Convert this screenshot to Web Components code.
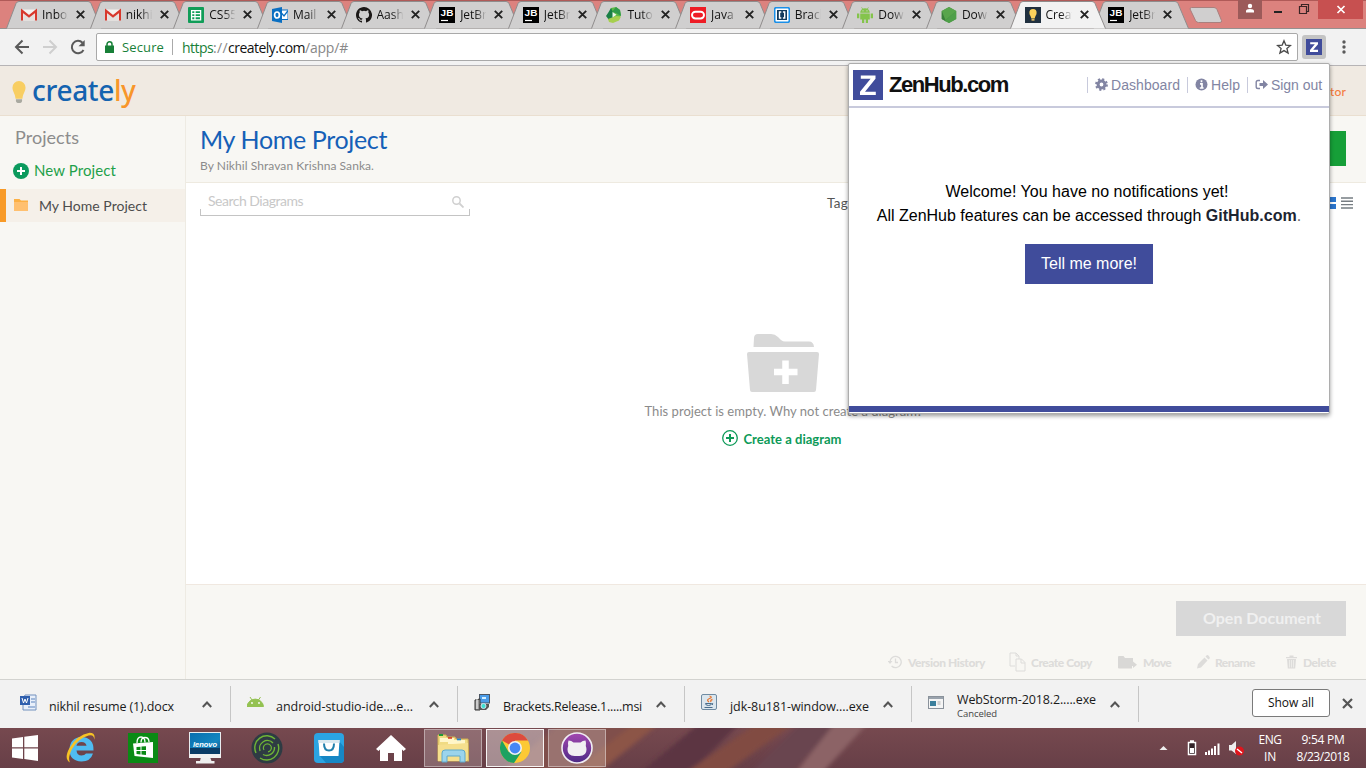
<!DOCTYPE html>
<html lang="en">
<head>
<meta charset="utf-8">
<title>Creately</title>
<style>
html,body{margin:0;height:100%;overflow:hidden}
body{font-family:"Open Sans","Noto Sans",sans-serif;font-size:12px;width:1366px;height:768px}
</style>
</head>
<body>
<desktop-screen></desktop-screen>
<script>
function define(name, css, html, setup) {
  const tpl = document.createElement('template');
  tpl.innerHTML = '<style>*{box-sizing:border-box}svg{display:block;flex:none}' + css + '</style>' + html;
  customElements.define(name, class extends HTMLElement {
    connectedCallback() {
      if (this.shadowRoot) return;
      const root = this.attachShadow({mode: 'open'});
      root.append(tpl.content.cloneNode(true));
      if (setup) setup(this, root);
    }
  });
}

/* Single line of text spread to a given width through letter spacing. */
define('fit-text', ':host{display:inline-block;white-space:pre;flex:none}span{display:inline-block}', '<span><slot></slot></span>', (el, root) => {
  const w = +el.getAttribute('w'), s = root.querySelector('span');
  const sp = (w - s.getBoundingClientRect().width) / el.textContent.length;
  s.style.letterSpacing = sp.toFixed(3) + 'px';
});

const ICONS = {
  gmail: '<rect x="1" y="2.5" width="14" height="11" rx="1" fill="#f4f2f0"/><path d="M3 13.5V5l5 4 5-4v8.5" fill="#e3e0de"/><path d="M1 13.5V3.8L8 9.4l7-5.6v9.7" fill="none" stroke="#d8382c" stroke-width="2.2"/>',
  sheets: '<rect width="16" height="16" rx="1" fill="#109d58"/><path d="M3.6 3.6h9v9.2h-9zM3.6 6.6h9M3.6 9.6h9M7 3.6v9" fill="none" stroke="#fff" stroke-width="1.3"/>',
  outlook: '<path d="M8 3h8v9.5H8z" fill="#fff" stroke="#0a6fc2"/><path d="M8.5 5l3.5 4L15.8 4" fill="none" stroke="#0a6fc2" stroke-width="1.3"/><path d="M0 2l10-2v16L0 14z" fill="#0a6fc2"/><ellipse cx="5" cy="8" rx="2.4" ry="3" fill="none" stroke="#fff" stroke-width="1.7"/>',
  github: '<path fill="#1b1817" d="M8 0C3.58 0 0 3.58 0 8c0 3.54 2.29 6.53 5.47 7.59.4.07.55-.17.55-.38 0-.19-.01-.82-.01-1.49-2.01.37-2.53-.49-2.69-.94-.09-.23-.48-.94-.82-1.13-.28-.15-.68-.52-.01-.53.63-.01 1.08.58 1.23.82.72 1.21 1.87.87 2.33.66.07-.52.28-.87.51-1.07-1.78-.2-3.64-.89-3.64-3.95 0-.87.31-1.59.82-2.15-.08-.2-.36-1.02.08-2.12 0 0 .67-.21 2.2.82a7.4 7.4 0 0 1 4 0c1.53-1.04 2.2-.82 2.2-.82.44 1.1.16 1.92.08 2.12.51.56.82 1.27.82 2.15 0 3.07-1.87 3.75-3.65 3.95.29.25.54.73.54 1.48 0 1.07-.01 1.93-.01 2.2 0 .21.15.46.55.38A8 8 0 0 0 8 0z"/>',
  jb: '<rect width="16" height="16" fill="#000"/><path d="M2 13.5h7" stroke="#fff" stroke-width="1.2"/><text x="1.6" y="9" font-family="Liberation Sans" font-weight="700" font-size="9.5" textLength="12.8" lengthAdjust="spacingAndGlyphs" fill="#fff">JB</text>',
  tuto: '<path d="M5 1l5-1 4 3 1 5-3 5-6 1-3-5z" fill="#5cb947"/><path d="M5 1l2 4v6l-4 2-3-4 2-3z" fill="#1a7f46"/><path d="M10 0l4 3 1 6-5-3-4-1z" fill="#2f9a4a"/><path d="M2 12l8-3 5 .5-2 4-6 2.500-4-1z" fill="#a6cf4d"/><path d="M6.500 5l4 2.800-4 2.700z" fill="#eef7ea"/>',
  oracle: '<rect width="16" height="16" fill="#ee1c25"/><rect x="2" y="4.7" width="12" height="6.8" rx="3.4" fill="none" stroke="#fff" stroke-width="1.9"/>',
  brackets: '<rect x=".7" y=".7" width="14.6" height="14.6" rx="1.5" fill="#fff" stroke="#1a8fe8" stroke-width="1.600"/><rect x="3" y="3" width="10" height="10" fill="#123a5c"/><path d="M7.300 5H5.500v6h1.800M8.900 5h1.800v6H8.900" stroke="#fff" stroke-width="1.4" fill="none"/>',
  android: '<path d="M3.2 5.8a4.8 4.6 0 0 1 9.6 0zM3.2 6.4h9.6v6.2H3.2zM0 6.6h2.3v4.6H0zM13.7 6.6H16v4.6h-2.3zM5 12h2.2v4H5zM8.8 12H11v4H8.8z" fill="#84c44c"/><path d="M4.6.4l1.2 1.8M11.4.4l-1.2 1.8" stroke="#84c44c" stroke-width=".8"/><circle cx="6" cy="3.8" r=".6" fill="#ddd"/><circle cx="10" cy="3.8" r=".6" fill="#ddd"/>',
  node: '<path d="M8 0l7.2 4v8L8 16 .8 12V4z" fill="#4b9a45"/><path d="M8 0l7.2 4-11 9L.8 12V4z" fill="#58a54c"/><path d="M.8 4L5 14.400.8 12z" fill="#3a7f3b"/><path d="M15.2 4L4 14l4 2 7.2-4z" fill="#4f9f49"/>',
  bulb: '<rect width="16" height="16" fill="#20303f"/><path d="M8 2a3.7 3.7 0 0 0-3.6 3.9C4.4 8 6 8.800 6.300 11.500h3.400C10 8.800 11.600 8 11.600 5.900A3.700 3.700 0 0 0 8 2z" fill="#fbd15b"/><path d="M6.500 12h3v1.700h-3z" fill="#d9b768"/>'
};

define('browser-tab', `
:host{display:block;flex:none;width:97px;height:29px;margin-right:-13.38px;position:relative}
.bg{position:absolute;inset:0}
.row{position:relative;display:flex;align-items:center;padding:0 0 0 15px;height:29px}
.t{margin-left:5px;width:27px;overflow:hidden;white-space:nowrap;font-size:12px;color:#111;-webkit-mask-image:linear-gradient(90deg,#000 55%,transparent 98%)}
.x{margin-left:7px}`,
`<svg class="bg" width="97" height="29"><path class="f" d="M.5 28.500L10 3.500Q11 1.500 13 1.500H82Q84 1.500 85 3.500L95.500 28.500" stroke="#8f8c8c"/></svg>
<div class="row"><svg class="i" width="16" height="16" viewBox="0 0 16 16"></svg><div class="t"><slot></slot></div>
<svg class="x" width="9" height="9" viewBox="0 0 9 9"><path d="M.8.8l7.400 7.400M8.200.8L.8 8.200" stroke="#222" stroke-width="1.900"/></svg></div>`,
(el, r) => {
  r.querySelector('.i').innerHTML = ICONS[el.getAttribute('icon')];
  const on = el.hasAttribute('active');
  r.querySelector('.f').setAttribute('fill', on ? '#f2f2f2' : '#d0cfcf');
  if (on) el.style.zIndex = 3;
});

define('tab-strip', `
:host{display:flex;height:29px;background:linear-gradient(#b05a58 0 1px,#dc827e 1px 28px,#96908f 28px);padding-left:6px;width:1366px;position:relative}
.new{margin:6px 0 0 12px}.sp{flex:1}
.c{display:flex;height:19px}.c div{display:flex;justify-content:center}
.u{width:24px;background:#9c5a59}.m,.r{width:28px}.cl{width:45px;background:#c75050;margin-right:3px}`,
`<browser-tab icon="gmail">Inbox</browser-tab><browser-tab icon="gmail">nikhil</browser-tab><browser-tab icon="sheets">CS5540</browser-tab><browser-tab icon="outlook">Mail -</browser-tab><browser-tab icon="github">Aasha</browser-tab><browser-tab icon="jb">JetBrains</browser-tab><browser-tab icon="jb">JetBrains</browser-tab><browser-tab icon="tuto">Tutorial</browser-tab><browser-tab icon="oracle">Java S</browser-tab><browser-tab icon="brackets">Brackets</browser-tab><browser-tab icon="android">Download</browser-tab><browser-tab icon="node">Download</browser-tab><browser-tab icon="bulb" active>Creately</browser-tab><browser-tab icon="jb">JetBrains</browser-tab>
<svg class="new" width="34" height="19"><path d="M1 3q0-1.500 1.500-1.500H25q2 0 3 2l4.500 11q.5 2-1.500 2H9.500q-2 0-3-2z" fill="#d0cfcf" stroke="#a9807e"/></svg>
<div class="sp"></div>
<div class="c"><div class="u"><svg width="10" height="19" viewBox="0 0 10 19"><circle cx="5" cy="6" r="2.200" fill="#fff"/><path d="M1 12.500V11q0-2 4-2t4 2v1.500z" fill="#fff"/></svg></div>
<div class="m"><svg width="28" height="19"><path d="M12 12h8" stroke="#222" stroke-width="2"/></svg></div>
<div class="r"><svg width="28" height="19"><path d="M9.500 6.500h7v7h-7zM11.500 6V4.500h7v7H17" stroke="#3a2525" fill="none" stroke-width="1.200"/></svg></div>
<div class="cl"><svg width="45" height="19"><path d="M19.500 6l7 7M26.500 6l-7 7" stroke="#fff" stroke-width="1.700"/></svg></div></div>`);

define('browser-toolbar', `
:host{display:flex;align-items:center;height:37px;background:#f2f2f2;border-bottom:1px solid #b6b4b6;padding-left:13px}
.b{margin-right:10px}
.box{display:flex;align-items:center;width:1202px;height:28px;margin-left:-1px;background:#fff;border:1px solid #a9a9a9;border-radius:2px;padding:0 5px 0 8px;font-size:14px;color:#888}
.g{color:#188038}.k{color:#111}.lock{margin-right:8px}.sep{width:1px;height:16px;background:#aaa;margin:0 9px 0 8px}
.z{width:24px;height:24px;margin-left:4px;border-radius:3px;background:#c4c4c4;display:grid;place-items:center}.dots{margin-left:15px}`,
`<svg class="b" width="18" height="18" viewBox="0 0 18 18"><path d="M9.500 2.500L3 9l6.500 6.500M3 9h13" stroke="#5a5a5a" stroke-width="2" fill="none"/></svg>
<svg class="b" width="18" height="18" viewBox="0 0 18 18"><path d="M8.500 2.500L15 9l-6.500 6.500M15 9H2" stroke="#cfcfcf" stroke-width="2" fill="none"/></svg>
<svg class="b" width="18" height="18" viewBox="0 0 18 18"><path d="M14.500 12a6.200 6.200 0 1 1-1-7.300" stroke="#5a5a5a" stroke-width="2" fill="none"/><path d="M15.700 2v6.300h-6.200z" fill="#5a5a5a"/></svg>
<div class="box"><svg class="lock" width="9" height="12" viewBox="0 0 9 12"><path d="M0 4.500h9V12H0z" fill="#188038"/><path d="M2 5V3.300a2.500 2.500 0 0 1 5 0V5" fill="none" stroke="#188038" stroke-width="1.500"/></svg>
<fit-text w="42" class="g" style="font-size:13px">Secure</fit-text><div class="sep"></div><fit-text w="31" class="g">https</fit-text><fit-text w="15">://</fit-text><fit-text w="77" class="k">creately.com</fit-text><fit-text w="43">/app/#</fit-text><div style="flex:1"></div>
<svg width="16" height="16" viewBox="0 0 16 16"><path d="M8 1.800l1.800 4.300 4.700.4-3.600 3 1.200 4.600L8 11.600l-4.100 2.500 1.200-4.600-3.600-3 4.700-.4z" fill="none" stroke="#4a4a4a" stroke-width="1.300"/></svg></div>
<div class="z"><svg width="16" height="16" viewBox="0 0 16 16"><rect width="16" height="16" fill="#404c9b"/><path d="M4.200 3.200h7.800v2L7.200 10.800H12v2.100H4v-2l4.800-5.600H4.200z" fill="#fff"/></svg></div>
<svg class="dots" width="6" height="14" viewBox="0 0 6 14"><g fill="#5a5a5a"><circle cx="3" cy="2" r="1.700"/><circle cx="3" cy="7" r="1.700"/><circle cx="3" cy="12" r="1.700"/></g></svg>`);

define('creately-header', `
:host{display:flex;height:50px;background:#f0eae2;border-bottom:1px solid #eadfd0;padding:0 20px 0 12px;align-items:center;font-family:Lato,sans-serif}
.bulb{margin-top:3px}
.logo{font-family:"Noto Sans","Open Sans",sans-serif;font-size:28px;font-weight:500;margin-left:6px;color:#1463b0;display:flex;line-height:36px;height:36px;margin-top:-1px}
.o{color:#f8962a}.r{margin-left:auto;color:#f47b3c;font-size:12px;font-weight:500;margin-top:2px}`,
`<svg class="bulb" width="14" height="23" viewBox="0 0 14 24"><path d="M7 0A6.800 6.800 0 0 0 .2 7C.2 11 3 13 3.400 18.500h7.200C11 13 13.800 11 13.800 7A6.800 6.800 0 0 0 7 0z" fill="#f8ce62"/><path d="M3.800 19h6.400v1.500q0 2.500-3.200 2.500t-3.200-2.500z" fill="#a9a9a0"/></svg>
<div class="logo"><fit-text w="82">create</fit-text><fit-text class="o" w="21">ly</fit-text></div><div class="r"><fit-text w="16">tor</fit-text></div>`);

define('project-sidebar', `
:host{display:block;width:186px;background:#f8f7f3;border-right:1px solid #eeebe3;padding-top:9px;font-family:Lato,sans-serif}
.h{font-size:18px;color:#8c8c8c;height:27px;line-height:25px;padding-left:15px}
.n{display:flex;align-items:center;height:37px;padding:1px 0 0 13px;color:#1ea04a;font-size:15px}.n svg{margin-right:5px}.n fit-text{margin-top:-3px}
.p{display:flex;align-items:center;height:33px;border-left:6px solid #f89a27;background:#f5f0e9;font-size:14px;color:#4d4d4d;padding:0 0 1px 8px}.p svg{margin-right:11px}`,
`<div class="h"><fit-text w="64">Projects</fit-text></div>
<div class="n"><svg width="16" height="16"><circle cx="8" cy="8" r="8" fill="#0b9a5d"/><path d="M8 4v8M4 8h8" stroke="#fff" stroke-width="2"/></svg><fit-text w="82">New Project</fit-text></div>
<div class="p"><svg width="14" height="12"><path d="M0 0h5.500l1.500 1.500h7V12H0z" fill="#fcb045"/><path d="M0 3h14v9H0z" fill="#ffc070"/></svg><fit-text w="108">My Home Project</fit-text></div>`);

define('action-link', `
:host{display:flex;align-items:center;font:900 12px Lato,sans-serif;color:#dddcda;height:20px}svg{margin-right:var(--g,5px)}`,
`<slot name="i"></slot><slot></slot>`);

define('project-view', `
:host{display:grid;grid-template-rows:67px 401px 95px;flex:1;font-family:Lato,sans-serif;background:#fff}
.head{background:#f8f7f3;border-bottom:1px solid #eeeae0;padding:7px 20px 0 14px;display:flex;justify-content:space-between}
.t{font-size:25px;line-height:32px;height:34px;color:#1560b7}.by{font-size:12px;line-height:18px;color:#8b8b8b}
.gb{width:170px;height:35px;background:#169f38;margin-top:8px}
.mid{display:flex;flex-direction:column}
.tools{display:flex;height:40px;padding:6px 13px 0 14px;font-size:14px}
.s{width:270px;height:27px;display:flex;align-items:center;padding:0 6px 1px 8px;justify-content:space-between;color:#c8c8c8;background:linear-gradient(#c4c4c4,#c4c4c4) 0 100%/1px 6px no-repeat,linear-gradient(#c4c4c4,#c4c4c4) 100% 100%/1px 6px no-repeat;border-bottom:1px solid #c4c4c4}
.s fit-text{margin-top:-2px}.s svg{margin-top:1px}
.tag{margin-left:357px;color:#555;line-height:28px;font-size:13.500px;width:480px}
.v{display:flex;gap:5px;margin-left:auto;padding-top:8px}
.e{display:flex;flex-direction:column;align-items:center;padding:111px 0 0 10px;width:100%;margin-left:2px}
.m{font-size:13px;color:#8b8b8b;line-height:18px;margin-top:10px;margin-left:1px}
.c{display:flex;align-items:center;gap:6px;color:#0d9a58;font-size:13px;font-weight:700;margin-top:9px;height:18px;margin-right:3px}.c fit-text{margin-top:2px}
.foot{background:#f8f7f3;border-top:1px solid #f0e8e0;display:flex;flex-direction:column;align-items:flex-end;padding:16px 20px 0 0}
.ob{width:170px;height:35px;background:#d8d8d8;color:#f0f0f0;font-size:16px;font-weight:700;display:flex;align-items:center;padding:0 0 2px 27px;flex:none}
.a{display:flex;margin:16px 10px 0 0}`,
`<div class="head"><div><div class="t"><fit-text w="187">My Home Project</fit-text></div><div class="by"><fit-text w="174">By Nikhil Shravan Krishna Sanka.</fit-text></div></div><div class="gb"></div></div>
<div class="mid"><div class="tools"><div class="s"><fit-text w="95">Search Diagrams</fit-text><svg width="12" height="12"><circle cx="4.500" cy="4.500" r="3.700" fill="none" stroke="#d0d0d0" stroke-width="1.500"/><path d="M7.500 7.500l4 4" stroke="#d0d0d0" stroke-width="1.800"/></svg></div>
<div class="tag"><fit-text w="21">Tag</fit-text></div>
<div class="v"><svg width="13" height="12"><path d="M0 0h6v5H0zM7 0h6v5H7zM0 7h6v5H0zM7 7h6v5H7z" fill="#2b75cc"/></svg><svg width="12" height="12"><path d="M0 1h12M0 4.300h12M0 7.600h12M0 11h12" stroke="#767d82" stroke-width="1.400"/></svg></div></div>
<div class="e"><svg width="72" height="58" viewBox="0 0 72 58"><path d="M6.500 13L7 4Q7.200 0 11 0H24Q28 0 31 3L34 6Q36 7.500 38 7.500H62Q66.500 7.500 67 13z" fill="#d8d8d8"/><path d="M2 18H70Q72 18 72 20L69 56Q68.800 58 67 58H5Q3.200 58 3 56L0 20Q0 18 2 18z" fill="#d8d8d8"/><path d="M38.500 26.500v23.500M27 38h23.500" stroke="#fff" stroke-width="6.500"/></svg>
<div class="m"><fit-text w="278">This project is empty. Why not create a diagram?</fit-text></div>
<div class="c"><svg width="16" height="16"><circle cx="8" cy="8" r="7.300" fill="none" stroke="#0d9a58" stroke-width="1.300"/><path d="M8 4v8M4 8h8" stroke="#0d9a58" stroke-width="2"/></svg><fit-text w="98">Create a diagram</fit-text></div></div></div>
<div class="foot"><div class="ob"><fit-text w="118">Open Document</fit-text></div>
<div class="a">
<action-link><svg slot="i" style="margin-right:6px" width="14" height="14" viewBox="0 0 14 14"><path d="M2 7a5.600 5.600 0 1 1 1.600 4M7.500 3.500v4H10" fill="none" stroke="#dddcda" stroke-width="1.300"/><path d="M-.5 6h5L2 9z" fill="#dddcda"/></svg><fit-text w="77">Version History</fit-text></action-link>
<action-link style="margin-left:24px"><svg slot="i" style="margin-right:5px" width="17" height="20" viewBox="0 0 17 20"><path d="M6 14H1V1h6l3 3v3M7 1v3h3M7 7h5.500l3.500 3.500V19H7zM12 7v4h4" fill="none" stroke="#dddcda"/></svg><fit-text w="61">Create Copy</fit-text></action-link>
<action-link style="margin-left:26px"><svg slot="i" style="margin-right:6px" width="19" height="14" viewBox="0 0 19 14"><path d="M0 2q0-1 1-1h4.500l1.500 2H15v6h-1v4.500H1q-1 0-1-1zM13 8.500h2V6.500l4 3.200L15 13v-2h-2z" fill="#d9d8d6"/></svg><fit-text w="28">Move</fit-text></action-link>
<action-link style="margin-left:26px"><svg slot="i" style="margin-right:5px" width="13" height="14" viewBox="0 0 13 14"><path d="M0 13.500l1-4.500L7.500 2.500l3 3L4 12.500zM8.500 1.500L10 0q1.500-.3 3 3l-1.500 1.500z" fill="#dddcda"/></svg><fit-text w="40">Rename</fit-text></action-link>
<action-link style="margin-left:31px"><svg slot="i" style="margin-right:6px" width="11" height="14" viewBox="0 0 11 14"><path d="M0 2h3.500V.5h4V2H11v1.300H0zM1 4h9l-.8 9.500H1.800z" fill="#dddcda"/><path d="M3.500 5v7.500M5.500 5v7.500M7.500 5v7.500" stroke="#f3f2ef" stroke-width=".7"/></svg><fit-text w="33">Delete</fit-text></action-link>
</div></div>`);

define('download-item', `
:host{display:flex;width:227px;height:36px;align-items:center;border-right:1px solid #c6c6c6;color:#1a1a1a;position:relative;font-size:12.500px}
::slotted(svg){flex:none;margin-top:-3px}
.t{margin-left:12px;line-height:17px;padding-top:4px;width:145px;display:flex;flex-direction:column}
:host([sub]) .t{padding-top:2px}
.up{margin-left:8px}`,
`<slot name="i"></slot><div class="t"><slot></slot></div><svg class="up" width="10" height="7"><path d="M.8 6L5 1.500 9.200 6" fill="none" stroke="#555" stroke-width="2"/></svg>`);

define('download-shelf', `
:host{display:flex;height:49px;background:#f2f2f2;border-top:1px solid #d3d3cf;padding-top:6px}
.s{margin:3px 0 0 113px;width:78px;height:28px;border:1px solid #7a7a7a;border-radius:3px;background:#fff;display:grid;place-items:center;font-size:12px;color:#111;padding-bottom:1px}
.x{margin:12px 0 0 12px}small{font-size:9.500px;line-height:11px;color:#444}`,
`<download-item style="width:231px;padding-left:20px"><svg slot="i" width="17" height="17"><path d="M5 1h11v15H3V6z" fill="#e8effa" stroke="#7391be"/><rect x="0" y="2" width="10" height="9" fill="#2f5fae"/><path d="M8 13h7M11 5h4M11 8h4" stroke="#5a83bd"/><path d="M2 4l1.500 5L5 5l1.500 4L8 4" stroke="#fff" fill="none"/></svg><fit-text w="125">nikhil resume (1).docx</fit-text></download-item>
<download-item style="padding-left:16px"><svg slot="i" width="17" height="17"><path d="M0 12.500a8.300 8.300 0 0 1 16.500 0zM3 3l2 3M13.500 3l-2 3" fill="#94c252" stroke="#94c252"/><circle cx="5" cy="9" r=".9" fill="#fff"/><circle cx="12" cy="9" r=".9" fill="#fff"/></svg><fit-text w="137">android-studio-ide....e...</fit-text></download-item>
<download-item style="padding-left:16px"><svg slot="i" width="17" height="17"><rect x="5.500" y=".5" width="10" height="8.500" fill="#4a9be8" stroke="#4b5563"/><path d="M8 3h4v2H8z" fill="#d4efff"/><path d="M1 6l5-1v11H1z" fill="#999" stroke="#333"/><path d="M5 10h10v3l-3 3H5z" fill="#555"/><circle cx="9.500" cy="12" r="2.500" fill="#3de0d0" stroke="#cde"/><path d="M3 4v11" stroke="#fff"/></svg><fit-text w="139">Brackets.Release.1.....msi</fit-text></download-item>
<download-item style="padding-left:16px"><svg slot="i" width="17" height="17"><rect x=".5" y=".5" width="15" height="15" rx="1.500" fill="#dbe6ee" stroke="#6f8ba2"/><path d="M8 8q-3-2 .5-3.500T8.500 2M10 8q-1-2 1.500-2.500" stroke="#e8762d" stroke-width="1.300" fill="none"/><path d="M4.500 9.500h6q0 2-3 2t-3-2M11 9.500q2 0 0 1.500M3.500 13.500h8" stroke="#496d8c" fill="none"/></svg><fit-text w="139">jdk-8u181-window....exe</fit-text></download-item>
<download-item sub style="padding-left:16px"><svg slot="i" width="17" height="17" viewBox="0 0 17 17"><rect x=".5" y="2.500" width="15" height="12" fill="#f5f5f5" stroke="#8a929b"/><path d="M1 4h14" stroke="#9aa3ad" stroke-width="2"/><path d="M2 7h6v5H2z" fill="#3b7f9c"/><path d="M9.500 8h3M9.500 10h3" stroke="#aaa"/></svg><fit-text w="139">WebStorm-2018.2.....exe</fit-text><small><fit-text w="40">Canceled</fit-text></small></download-item>
<div class="s"><fit-text w="46">Show all</fit-text></div><svg class="x" width="11" height="11"><path d="M1 1l9 9M10 1l-9 9" stroke="#555" stroke-width="2.200"/></svg>`);

define('task-button', `
:host{display:flex;width:58px;height:38px;margin:1px 2px 0;align-items:center;justify-content:center}
:host([open]){background:rgba(255,255,255,.2);border:1px solid rgba(255,255,255,.4)}
:host([front]){background:rgba(255,255,255,.4);border-color:rgba(255,255,255,.9)}`, '<slot></slot>');

define('task-bar', `
:host{display:grid;height:40px;position:relative;background:#6c434a;overflow:hidden}
:host>*{grid-area:1/1}
.r{display:flex;position:relative;height:40px}
.tray{margin-left:auto;display:flex;align-items:center;color:#fff;font-size:12px;line-height:17px;text-align:center;padding-right:15px}
.lang{width:26px;margin-left:12px}.clk{width:56px;margin-left:12px}`,
`<svg width="1366" height="40"><defs><linearGradient id="g" x2="0" y2="1"><stop stop-color="#76494f"/><stop offset="1" stop-color="#673f47"/></linearGradient><filter id="b" x="-20%" width="140%"><feGaussianBlur stdDeviation="2"/></filter></defs><rect width="1366" height="40" fill="url(#g)"/>
<g filter="url(#b)"><path d="M560-5H650L590 45H500z" fill="#804f4c"/><path d="M635-5H660L598 45H570z" fill="#8c5446"/><path d="M700-5H740L690 45H640z" fill="#5b3443"/><path d="M757-5H795L725 45H685z" fill="#814b42"/><path d="M800-5H840L790 45H750z" fill="#694550"/><path d="M835-5H868L822 45H795z" fill="#8c6466"/></g></svg>
<div class="r">
<task-button style="width:46px"><svg width="26" height="26" viewBox="0 0 26 26"><path d="M0 3.500L11 2v10.300H0zM12.300 1.800L26 0v12.300H12.300zM0 13.600h11V24L0 22.400zM12.300 13.600H26V26l-13.700-1.900z" fill="#fff"/></svg></task-button>
<task-button><svg width="30" height="32" viewBox="0 0 30 32"><path d="M27.500 18.500H10.500q.5 5 5 5 3.200 0 4.500-2h7Q24.500 29.500 15.500 29.500 3.500 29 3.500 17.500 4 5.500 15.500 5 28 5.500 27.500 18.500zM10.500 13.800H20.500q-.5-3.800-5-3.800t-5 3.800z" fill="#4fbcf2"/><path d="M4 30.500Q-2.500 27 3.500 16 11 3 23.500.8q6.500 0 4.700 7 0-5.800-5.700-4.300Q12 6.500 6 17q-4.500 9-2 13.500z" fill="#f7c325"/></svg></task-button>
<task-button><svg width="30" height="30"><rect width="30" height="30" fill="#0a8a14"/><path d="M5 10.500l20-1.500v16L6.500 23z" fill="#fff"/><path d="M9 10q0-6 4-6t4 5.500M13 9.500q0-5 4-5t4 4.500" fill="none" stroke="#fff" stroke-width="1.300"/><path d="M8.500 14l4-.3V17h-4zM13.500 13.600l4.500-.3V17h-4.500zM8.500 18h4v3.500l-4-.4zM13.500 18H18v4l-4.500-.4z" fill="#0a8a14"/></svg></task-button>
<task-button><svg width="32" height="32"><defs><linearGradient id="l" x2="1" y2="1"><stop stop-color="#0a6eae"/><stop offset=".6" stop-color="#1486c0"/><stop offset="1" stop-color="#094b80"/></linearGradient></defs><path d="M12 25h9l1.500 4h3v2.500H7V29h4z" fill="#eee"/><rect x=".5" y=".5" width="31" height="25" fill="url(#l)" stroke="#e8edf0"/><path d="M1 16h30v6H1z" fill="#0a3c66"/><rect y="22" width="32" height="4" fill="#f1f1f1"/><text x="4" y="15" font-family="Liberation Sans" font-style="italic" font-weight="700" font-size="7.500" textLength="24" fill="#fff">lenovo</text></svg></task-button>
<task-button><svg width="32" height="32"><circle cx="16" cy="16" r="15.500" fill="#2e3b43"/><g fill="none" stroke="#6fb536" stroke-width="1.400"><path d="M5 21A12 12 0 0 1 24 7M27 12A12 12 0 0 1 9 26"/><path d="M9 19A7.800 7.800 0 0 1 22 11M23.500 15A7.800 7.800 0 0 1 12 22.500"/><path d="M13 18A4 4 0 1 1 17 19.800" stroke-width="1.200"/></g></svg></task-button>
<task-button><svg width="30" height="30"><rect width="30" height="30" rx="4" fill="#2ba4e2"/><path d="M25 8l5 6v12q0 4-4 4H12L6 23z" fill="#1687c5"/><path d="M4.500 7h21L24.500 23h-19z" fill="#fff"/><path d="M4.500 7h21v3h-21z" fill="#dbe9f0"/><path d="M10 10.500q0 7 5 7t5-7" fill="none" stroke="#2280ad" stroke-width="2"/></svg></task-button>
<task-button><svg width="32" height="28"><path d="M16 1l15 14-2.500 2L27 15.500V27h-8v-8h-6v8H5V15.500L3.500 17 1 15z" fill="#fff"/></svg></task-button>
<task-button open><svg width="32" height="30"><path d="M1 2h8l1 2h8l1 2h12l1 22H1z" fill="#f0db83" stroke="#cfae52"/><path d="M3 5h14v4H3zM11 7h17v4H11z" fill="#fff6c9"/><path d="M1 12l30-2-1 18H1z" fill="#f5df8d"/><path d="M2 1h4v2H2z" fill="#1e9b38"/><path d="M11 4h4v1.800h-4z" fill="#d6482d"/><path d="M20 5.500h4v1.800h-4z" fill="#2285cf"/><path d="M5 29V20q0-3 3-3h17q3 0 3 3v9h-5v-6H10v6z" fill="#9bd4ec" stroke="#5ea9cb"/></svg></task-button>
<task-button open front><svg width="30" height="30" viewBox="0 0 30 30"><circle cx="15" cy="15" r="15" fill="#fcc934"/><path d="M15 15L2 7.500A15 15 0 0 1 28 7.500H15z" fill="#dd4b3e"/><path d="M2 7.500A15 15 0 0 0 14 30L21.500 18.800 8.500 18.800z" fill="#1da261"/><circle cx="15" cy="15" r="7" fill="#f1f1f1"/><circle cx="15" cy="15" r="5.400" fill="#4687f4"/></svg></task-button>
<task-button open><svg width="32" height="32"><defs><linearGradient id="p" x2="0" y2="1"><stop stop-color="#a348b0"/><stop offset="1" stop-color="#4d2a86"/></linearGradient></defs><circle cx="16" cy="16" r="15" fill="url(#p)" stroke="#f1edf3" stroke-width="1.600"/><path d="M7.500 8.500q3 0 5 2h7q2-2 5-2 1 3 .3 5.500.7 1.500.7 3.500 0 6.500-7 6.500h-5q-7 0-7-6.500 0-2 .7-3.500-.7-2.500.3-5.500z" fill="#f1eff2"/></svg></task-button>
<div class="tray"><svg width="9" height="6"><path d="M.5 5L4.500 1l4 4z" fill="#eee"/></svg>
<svg style="margin-left:19px" width="10" height="16"><path d="M1.500 2.500h7v12h-7zM3 1h4" fill="#332328" stroke="#fff" stroke-width="1.500"/><path d="M3 8h4v5H3z" fill="#fff"/></svg>
<svg style="margin-left:8px" width="16" height="13"><path d="M0 10h2v3H0zM3 8.500h2V13H3zM6 6.500h2V13H6zM9 4h2v9H9zM12.500 1.500h2V13h-2z" fill="#fff"/></svg>
<svg style="margin-left:8px" width="16" height="15"><path d="M0 4h2.500L7 0v13L2.500 9.500H0z" fill="#eee"/><circle cx="10.500" cy="10" r="4.500" fill="#e0151c"/><path d="M8 8l5 4" stroke="#fff" stroke-width="1.500"/></svg>
<div class="lang"><fit-text w="23">ENG</fit-text><br><fit-text w="12">IN</fit-text></div><div class="clk"><fit-text w="43">9:54 PM</fit-text><br><fit-text w="53">8/23/2018</fit-text></div></div></div>`);

define('zenhub-popup', `
:host{position:absolute;left:848px;top:63px;width:482px;height:351px;background:#fff;border:1px solid #adadad;border-radius:2px;box-shadow:0 2px 4px rgba(0,0,0,.4);display:flex;flex-direction:column;box-sizing:border-box;font:16px/24px "Liberation Sans",Arial,sans-serif;color:#000;z-index:10}
.h{height:44px;border-bottom:2px solid #c8cadc;display:flex;align-items:center;padding:0 7px 0 4px}
.n{font-size:22px;font-weight:700;color:#111;margin:-1px 0 0 6px}
.l{margin-left:auto;display:flex;font-size:14px;line-height:16px;color:#8285a3;align-items:center;margin-top:-1px}
.l span{display:flex;align-items:center;border-left:1px solid #c8cadc;padding-left:7px;margin-left:7px}.l svg{margin-right:3px}
.b{flex:1;padding-top:72px;display:flex;flex-direction:column;align-items:center}b{color:#1c2430}
.btn{margin-top:16px;width:128px;height:40px;background:#404c9b;color:#fff;display:grid;place-items:center;padding-bottom:1px}
.f{height:6px;background:#404c9b;margin-bottom:1px}`,
`<div class="h"><svg width="30" height="30"><rect width="30" height="30" fill="#404c9b"/><path d="M7.800 5.500h14.700v3.200L12 21.800h10.800V25H7V21.700L17.600 8.800H7.800z" fill="#fff"/></svg><fit-text class="n" w="119">ZenHub.com</fit-text>
<div class="l"><span><svg width="13" height="13" viewBox="0 0 13 13"><circle cx="6.500" cy="6.500" r="3.400" fill="none" stroke="#8285a3" stroke-width="3"/><circle cx="6.500" cy="6.500" r="5.400" fill="none" stroke="#8285a3" stroke-width="2" stroke-dasharray="2.120 2.120"/></svg><fit-text w="69">Dashboard</fit-text></span>
<span><svg width="13" height="13"><circle cx="6.500" cy="6.500" r="6" fill="#8285a3"/><path d="M6.500 2.200v2M5 5.800h2v4M4.800 10h3.800" stroke="#fff" stroke-width="1.700" fill="none"/></svg><fit-text w="29">Help</fit-text></span>
<span><svg width="13" height="12"><path d="M5 1.500H3q-1.800 0-1.800 1.800v4.400Q1.200 9.500 3 9.500h2" fill="none" stroke="#8285a3" stroke-width="1.400"/><path d="M4.500 4H8V1l5 4.500L8 10V7H4.500z" fill="#8285a3"/></svg><fit-text w="51">Sign out</fit-text></span></div></div>
<div class="b"><fit-text w="283" style="margin-left:-4px">Welcome! You have no notifications yet!</fit-text><div style="display:flex"><fit-text w="329">All ZenHub features can be accessed through </fit-text><b><fit-text w="91">GitHub.com</fit-text></b><span style="color:#666">.</span></div><div class="btn"><fit-text w="96">Tell me more!</fit-text></div></div><div class="f"></div>`);

define('desktop-screen', `
:host{display:flex;flex-direction:column;width:1366px;height:768px;position:relative;overflow:hidden}
.body{display:flex;height:563px;flex:none}creately-header,tab-strip,browser-toolbar,download-shelf,task-bar{flex:none;box-sizing:border-box}project-sidebar{box-sizing:border-box;flex:none}download-shelf{height:49px}`,
`<tab-strip></tab-strip><browser-toolbar></browser-toolbar><creately-header></creately-header><div class="body"><project-sidebar></project-sidebar><project-view></project-view></div><download-shelf></download-shelf><task-bar></task-bar><zenhub-popup></zenhub-popup>`);
</script>
</body>
</html>
